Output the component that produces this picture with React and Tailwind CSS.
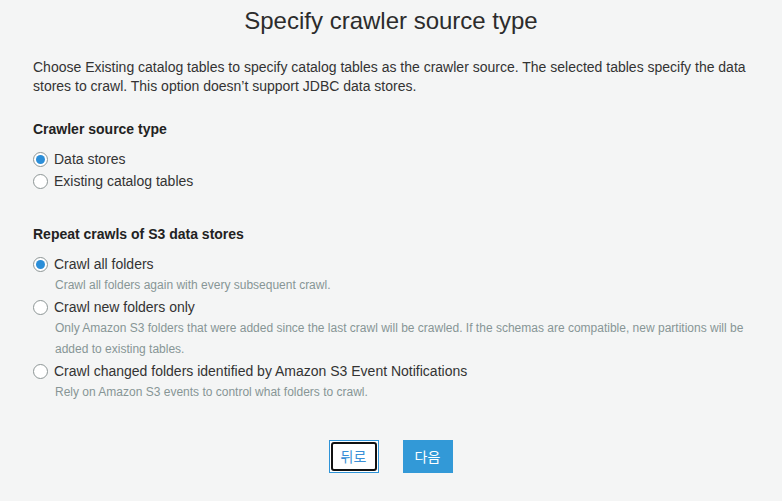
import React from "react";

function Radio({ checked, label, desc }) {
  return (
    <div>
      <div className="flex items-center h-[22px]">
        <span className="w-[15px] h-[15px] ml-[33px] rounded-full border border-[#8d9696] bg-white flex items-center justify-center shrink-0">
          {checked && <span className="w-[9px] h-[9px] rounded-full bg-[#2b8ed8]" />}
        </span>
        <span className="ml-[6px] text-[14px] text-[#333]">{label}</span>
      </div>
      {desc &&
        desc.map((d, i) => (
          <div key={i} className="pl-[55px] pr-[30px] text-[12px] leading-[21px] text-[#879596]">
            {d}
          </div>
        ))}
    </div>
  );
}

export default function App() {
  return (
    <div className="min-h-[501px] bg-[#f4f5f5] font-['Liberation_Sans',Arial,sans-serif] text-[#333]">
      <h1 className="text-center text-[24px] leading-[30px] pt-[6px] text-[#2c2c2c]">
        Specify crawler source type
      </h1>
      <p className="mt-[22px] px-[33px] text-[14px] leading-[19px] text-[#333]">
        Choose Existing catalog tables to specify catalog tables as the crawler source. The selected tables specify the data
        <br />
        stores to crawl. This option doesn’t support JDBC data stores.
      </p>
      <div className="mt-[23px] px-[33px] text-[14px] leading-[20px] font-bold text-[#222]">Crawler source type</div>
      <div className="mt-[9px]">
        <Radio checked label="Data stores" />
        <Radio label="Existing catalog tables" />
      </div>
      <div className="mt-[32px] px-[33px] text-[14px] leading-[20px] font-bold text-[#222]">Repeat crawls of S3 data stores</div>
      <div className="mt-[9px]">
        <Radio checked label="Crawl all folders" desc={["Crawl all folders again with every subsequent crawl."]} />
        <Radio
          label="Crawl new folders only"
          desc={[
            "Only Amazon S3 folders that were added since the last crawl will be crawled. If the schemas are compatible, new partitions will be",
            "added to existing tables.",
          ]}
        />
        <Radio
          label="Crawl changed folders identified by Amazon S3 Event Notifications"
          desc={["Rely on Amazon S3 events to control what folders to crawl."]}
        />
      </div>
      <div className="mt-[37px] flex justify-center gap-[24px] pr-[1px] font-['Noto_Sans_CJK_KR','Liberation_Sans',sans-serif]">
        <button className="w-[50px] h-[33px] border border-[#2e94d8] bg-white p-[1px] flex">
          <span className="flex-1 rounded-[3px] border-2 border-[#111] flex items-center justify-center text-[14px] text-[#3a8fd6]">
            뒤로
          </span>
        </button>
        <button className="w-[50px] h-[33px] bg-[#3299d7] text-white text-[14px] flex items-center justify-center">
          다음
        </button>
      </div>
    </div>
  );
}
